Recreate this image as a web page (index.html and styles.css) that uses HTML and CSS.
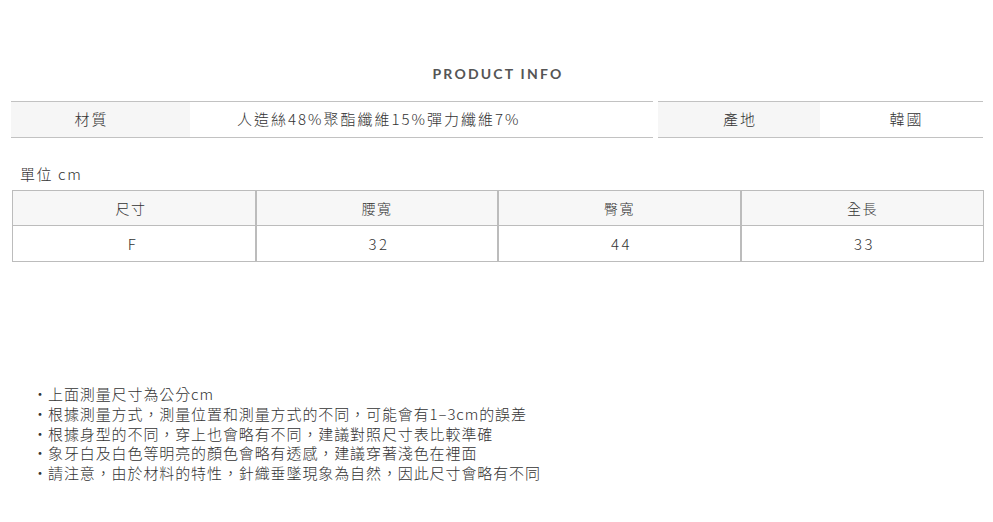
FILE: index.html
```html
<!DOCTYPE html>
<html lang="zh-Hant">
<head>
<meta charset="utf-8">
<title>PRODUCT INFO</title>
<link rel="stylesheet" href="styles.css">
</head>
<body>
<div class="page">
  <h2 class="title">PRODUCT INFO</h2>
  <div class="info">
    <div class="info-block wide">
      <div class="lbl lbl-a">材質</div>
      <div class="val val-a">人造絲48%聚酯纖維15%彈力纖維7%</div>
    </div>
    <div class="info-block narrow">
      <div class="lbl lbl-b">產地</div>
      <div class="val val-b">韓國</div>
    </div>
  </div>
  <div class="unit">單位 cm</div>
  <div class="size">
    <div class="cell head first">尺寸</div>
    <div class="cell head">腰寬</div>
    <div class="cell head">臀寬</div>
    <div class="cell head">全長</div>
    <div class="cell first num">F</div>
    <div class="cell num">32</div>
    <div class="cell num">44</div>
    <div class="cell num">33</div>
  </div>
  <ul class="notes">
    <li>上面測量尺寸為公分cm</li>
    <li>根據測量方式，測量位置和測量方式的不同，可能會有1–3cm的誤差</li>
    <li>根據身型的不同，穿上也會略有不同，建議對照尺寸表比較準確</li>
    <li>象牙白及白色等明亮的顏色會略有透感，建議穿著淺色在裡面</li>
    <li>請注意，由於材料的特性，針織垂墜現象為自然，因此尺寸會略有不同</li>
  </ul>
</div>
</body>
</html>
```

FILE: styles.css
```css
* { box-sizing: border-box; }
html, body { margin: 0; padding: 0; background: #fff; }
body {
  font-family: "Noto Sans CJK TC", "Noto Sans", sans-serif;
  color: #333;
  width: 993px;
  height: 522px;
  overflow: hidden;
}
.page { padding-top: 65px; }
.title {
  margin: 0;
  text-align: center;
  font-family: "Lato", "Noto Sans", sans-serif;
  font-weight: 700;
  font-size: 14px;
  line-height: 18px;
  letter-spacing: 2.2px;
  color: #555;
  padding-left: 3px;
}
.info {
  display: flex;
  gap: 5px;
  margin: 18px 10px 0 11px;
}
.info-block {
  display: flex;
  border-top: 1px solid #c2c2c2;
  border-bottom: 1px solid #c2c2c2;
  height: 37px;
}
.wide { width: 642px; }
.narrow { flex: 1; }
.lbl {
  background: #f6f6f6;
  display: flex;
  align-items: center;
  justify-content: center;
  font-size: 15px;
  font-weight: 300;
  letter-spacing: 2px;
  color: #333;
  padding-bottom: 2px;
}
.lbl-a { width: 179px; padding-right: 18px; }
.lbl-b { width: 162px; padding-left: 2px; }
.val {
  flex: 1;
  display: flex;
  align-items: center;
  font-size: 15px;
  font-weight: 300;
  letter-spacing: 2px;
  color: #333;
  padding-bottom: 2px;
}
.val-a { padding-left: 47px; }
.val-b { justify-content: center; padding-left: 10px; }
.unit {
  margin: 26px 0 0 20px;
  font-size: 15px;
  line-height: 20px;
  font-weight: 300;
  letter-spacing: 1.6px;
  color: #333;
}
.size {
  display: grid;
  grid-template-columns: 242px 242px 243px 1fr;
  margin: 6px 9px 0 12px;
  border: 1px solid #bcbcbc;
  font-family: "Noto Sans CJK KR", "Noto Sans", sans-serif;
  font-weight: 300;
  font-size: 14px;
  letter-spacing: 1.5px;
  color: #333;
}
.cell {
  height: 35px;
  display: flex;
  align-items: center;
  justify-content: center;
  border-left: 2px solid #bcbcbc;
  padding-bottom: 1px;
}
.cell.num { font-size: 15px; letter-spacing: 2.5px; padding-left: 4px; }
.cell.first { border-left: none; padding-right: 6px; }
.cell.head {
  background: #f7f7f7;
  height: 35px;
  border-bottom: 1px solid #bcbcbc;
}
.notes {
  list-style: none;
  margin: 122px 0 0 0;
  padding: 0 0 0 32px;
  font-family: "Noto Sans CJK TC", "Noto Sans", sans-serif;
  font-weight: 300;
  font-size: 15px;
  line-height: 19.8px;
  letter-spacing: 0.9px;
  color: #333;
}
.notes li::before {
  content: "・";
  display: inline-block;
  width: 16px;
  letter-spacing: 0;
  text-align: center;
}
```
